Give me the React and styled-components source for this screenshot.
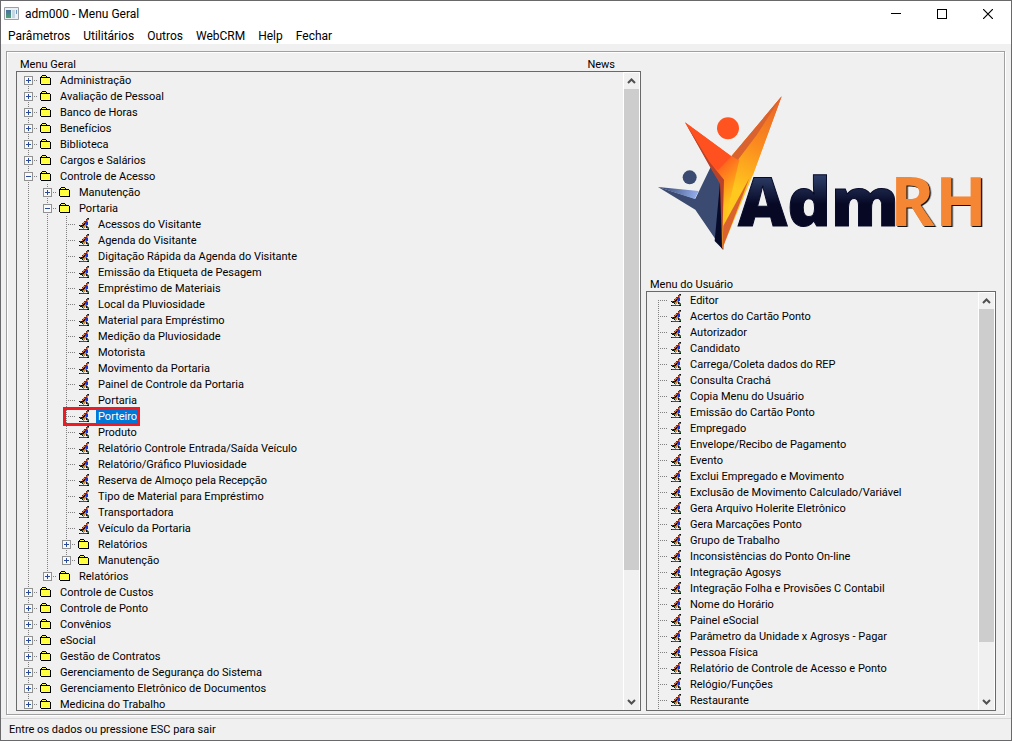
import { useState } from "react";
import styled, { createGlobalStyle } from "styled-components";

const GlobalStyle = createGlobalStyle`
  * {
    box-sizing: border-box;
  }
  body {
    margin: 0;
    font-family: Roboto, "Liberation Sans", sans-serif;
    font-size: 11px;
    color: #000;
  }
  button {
    padding: 0;
    border: none;
    background: none;
    font: inherit;
    color: inherit;
  }
`;

const Window = styled.div`
  display: flex;
  flex-direction: column;
  height: 100vh;
  border: 1px solid #69696b;
  background: #f0f0f0;
`;

const TitleBar = styled.header`
  display: flex;
  align-items: center;
  height: 25px;
  padding-left: 3px;
  background: #fff;
`;

const Title = styled.h1`
  flex: 1;
  margin: 0 0 0 6px;
  font-size: 12px;
  font-weight: 400;
`;

const WindowButton = styled.button`
  display: flex;
  align-items: center;
  justify-content: center;
  width: 46px;
  height: 25px;
`;

const MenuBar = styled.nav`
  display: flex;
  gap: 13px;
  height: 18px;
  padding-left: 7px;
  background: #fff;
`;

const MenuButton = styled.button`
  height: 18px;
  font-size: 12px;
  line-height: 20px;
`;

const Frame = styled.main`
  flex: 1;
  min-height: 0;
  display: grid;
  grid-template-columns: minmax(0, 1fr) 350px;
  gap: 5px;
  margin: 7px 6px 3px 5px;
  padding: 4px 8px 3px 9px;
  border: 1px solid #a0a0a0;
  box-shadow: 1px 1px 0 #fff, inset 1px 1px 0 #fff;
`;

const Column = styled.section`
  display: flex;
  flex-direction: column;
  min-width: 0;
  min-height: 0;
`;

const Captions = styled.div`
  display: flex;
  justify-content: space-between;
  height: 15px;
  padding: 0 26px 0 4px;
  line-height: 17px;
`;

const Caption = styled.h2`
  margin: 0;
  font-size: 11px;
  font-weight: 400;
`;

const LogoArea = styled.div`
  display: flex;
  align-items: center;
  justify-content: center;
  height: 220px;
  padding: 14px 0 0 2px;
`;

const ListBox = styled.div`
  flex: 1;
  min-height: 0;
  display: flex;
  border: 1px solid #696969;
`;

const Tree = styled.ul`
  flex: 1;
  min-width: 0;
  margin: 0;
  padding: 0 0 0 2px;
  overflow: hidden;
  list-style: none;
`;

const Branch = styled.ul`
  margin: 0;
  padding: 0;
  list-style: none;
`;

const Row = styled.div`
  display: flex;
  align-items: center;
  width: max-content;
  height: 16px;
`;

const RowItem = styled.div`
  display: flex;
  height: 16px;
`;

// thick red frame over the row, does not push the neighbours
const MarkedItem = styled(RowItem)`
  position: relative;
  &::after {
    content: "";
    position: absolute;
    inset: -1px -3px -2px 6px;
    border: 3px solid #ed1c24;
    pointer-events: none;
  }
`;

const Cell = styled.span`
  display: block;
  width: 19px;
  height: 16px;
`;

const Toggle = styled.button`
  display: block;
  width: 19px;
  height: 16px;
`;

const IconSlot = styled.span`
  display: flex;
  align-items: center;
  width: 20px;
  height: 16px;
  padding-left: ${(props) => (props.$folder ? 2 : 3)}px;
`;

const Label = styled.button`
  height: 16px;
  padding: 1px 0 0 2px;
  line-height: 15px;
  white-space: nowrap;
  background: ${(props) => (props.$active ? "#0078d7" : "transparent")};
  color: ${(props) => (props.$active ? "#fff" : "#000")};
`;

const ScrollBar = styled.div`
  display: flex;
  flex-direction: column;
  width: 17px;
  border: 1px solid #fff;
  border-width: 1px 1px 0 1px;
`;

const ScrollButton = styled.button`
  display: flex;
  align-items: center;
  justify-content: center;
  height: 16px;
`;

const Track = styled.div`
  flex: 1;
`;

const Thumb = styled.div`
  height: ${(props) => props.$size}%;
  background: #cdcdcd;
`;

const StatusBar = styled.footer`
  height: 22px;
  padding-left: 8px;
  border-top: 1px solid #d7d7d7;
  line-height: 22px;
`;

const menus = ["Parâmetros", "Utilitários", "Outros", "WebCRM", "Help", "Fechar"];

const portaria = [
  "Acessos do Visitante",
  "Agenda do Visitante",
  "Digitação Rápida da Agenda do Visitante",
  "Emissão da Etiqueta de Pesagem",
  "Empréstimo de Materiais",
  "Local da Pluviosidade",
  "Material para Empréstimo",
  "Medição da Pluviosidade",
  "Motorista",
  "Movimento da Portaria",
  "Painel de Controle da Portaria",
  "Portaria",
  "Porteiro",
  "Produto",
  "Relatório Controle Entrada/Saída Veículo",
  "Relatório/Gráfico Pluviosidade",
  "Reserva de Almoço pela Recepção",
  "Tipo de Material para Empréstimo",
  "Transportadora",
  "Veículo da Portaria",
];

const folder = (label, children = [], open = false) => ({ label, children, open });
const program = (label) => ({ label });

const mainMenu = [
  folder("Administração"),
  folder("Avaliação de Pessoal"),
  folder("Banco de Horas"),
  folder("Benefícios"),
  folder("Biblioteca"),
  folder("Cargos e Salários"),
  folder(
    "Controle de Acesso",
    [
      folder("Manutenção"),
      folder(
        "Portaria",
        [...portaria.map(program), folder("Relatórios"), folder("Manutenção")],
        true
      ),
      folder("Relatórios"),
    ],
    true
  ),
  folder("Controle de Custos"),
  folder("Controle de Ponto"),
  folder("Convênios"),
  folder("eSocial"),
  folder("Gestão de Contratos"),
  folder("Gerenciamento de Segurança do Sistema"),
  folder("Gerenciamento Eletrônico de Documentos"),
  folder("Medicina do Trabalho"),
];

const userMenu = [
  "Editor",
  "Acertos do Cartão Ponto",
  "Autorizador",
  "Candidato",
  "Carrega/Coleta dados do REP",
  "Consulta Crachá",
  "Copia Menu do Usuário",
  "Emissão do Cartão Ponto",
  "Empregado",
  "Envelope/Recibo de Pagamento",
  "Evento",
  "Exclui Empregado e Movimento",
  "Exclusão de Movimento Calculado/Variável",
  "Gera Arquivo Holerite Eletrônico",
  "Gera Marcações Ponto",
  "Grupo de Trabalho",
  "Inconsistências do Ponto On-line",
  "Integração Agosys",
  "Integração Folha e Provisões C Contabil",
  "Nome do Horário",
  "Painel eSocial",
  "Parâmetro da Unidade x Agrosys - Pagar",
  "Pessoa Física",
  "Relatório de Controle de Acesso e Ponto",
  "Relógio/Funções",
  "Restaurante",
  "",
].map(program);

const runnerPixels = [
  "........nk.",
  ".......nrr.",
  ".......ro..",
  ".....nbbo..",
  "....oobbn..",
  "...nokbbb..",
  "...okkobb..",
  "kgkkkoor...",
  ".kkgooykr..",
  "...kyo.knr.",
  "....o...og.",
  "kgggggggkk.",
];

const runnerColors = {
  k: "#101010",
  n: "#6b2a10",
  r: "#c4471c",
  o: "#e8782a",
  y: "#f5b800",
  b: "#1733e0",
  g: "#2f5a3c",
};

function RunnerIcon() {
  return (
    <svg width="11" height="12" viewBox="0 0 11 12" shapeRendering="crispEdges">
      {runnerPixels.map((line, y) =>
        [...line].map((c, x) =>
          c === "." ? null : (
            <rect key={x + "-" + y} x={x} y={y} width="1" height="1" fill={runnerColors[c]} />
          )
        )
      )}
    </svg>
  );
}

function FolderIcon() {
  return (
    <svg width="11" height="10" viewBox="0 0 11 10" shapeRendering="crispEdges">
      <path d="M2 1h4v2h4v6H1V3h1z" fill="#ffff3c" />
      <path d="M2 0h4v1H2zM1 1h1v1H1zM6 1h1v1H6zM0 2h10v1H0zM0 2h1v7H0zM10 3h1v7h-1zM1 9h10v1H1z" fill="#000" />
      <path d="M2 4h1v1H2zM4 4h1v1H4zM6 4h1v1H6zM8 4h1v1H8zM3 6h1v1H3zM5 6h1v1H5zM7 6h1v1H7zM2 8h1v1H2zM4 8h1v1H4zM6 8h1v1H6zM8 8h1v1H8z" fill="#fffbb0" />
    </svg>
  );
}

function Guide({ kind, up = true, down = true, open }) {
  const top = up ? 0 : 8;
  const bottom = down ? 16 : 9;
  return (
    <svg width="19" height="16" viewBox="0 0 19 16" display="block" shapeRendering="crispEdges">
      {kind !== "blank" && (
        <path d={`M9.5 ${top}V${bottom}`} stroke="#808080" strokeDasharray="1 1" />
      )}
      {(kind === "leaf" || kind === "box") && (
        <path d="M9 8.5H19" stroke="#808080" strokeDasharray="1 1" />
      )}
      {kind === "box" && (
        <>
          <rect x="5.5" y="4.5" width="8" height="8" fill="#f8f8f8" stroke="#919191" />
          <path d={open ? "M7 8.5h5" : "M7 8.5h5M9.5 6v5"} stroke="#2c4a9a" />
        </>
      )}
    </svg>
  );
}

function TreeNode({ node, lines, first, last, active, onSelect }) {
  const [open, setOpen] = useState(Boolean(node.open));
  const isFolder = Boolean(node.children);
  const Item = node.label === "Porteiro" ? MarkedItem : RowItem;

  return (
    <li>
      <Row>
        {lines.map((on, i) => (
          <Cell key={i}>
            <Guide kind={on ? "line" : "blank"} />
          </Cell>
        ))}
        <Item>
          {isFolder ? (
            <Toggle aria-label={"Abrir " + node.label} aria-expanded={open} onClick={() => setOpen(!open)}>
              <Guide kind="box" up={!first} down={!last} open={open} />
            </Toggle>
          ) : (
            <Cell>
              <Guide kind="leaf" up={!first} down={!last} />
            </Cell>
          )}
          <IconSlot $folder={isFolder}>{isFolder ? <FolderIcon /> : <RunnerIcon />}</IconSlot>
          <Label $active={active === node.label && !isFolder} onClick={() => onSelect(node.label)}>
            {node.label}
          </Label>
        </Item>
      </Row>
      {open && node.children.length > 0 && (
        <Branch>
          {node.children.map((child, i) => (
            <TreeNode
              key={child.label + i}
              node={child}
              lines={[...lines, !last]}
              last={i === node.children.length - 1}
              active={active}
              onSelect={onSelect}
            />
          ))}
        </Branch>
      )}
    </li>
  );
}

function TreeList({ items, selected, thumb }) {
  const [active, setActive] = useState(selected);

  return (
    <ListBox>
      <Tree>
        {items.map((item, i) => (
          <TreeNode
            key={item.label}
            node={item}
            lines={[]}
            first={i === 0}
            last={i === items.length - 1}
            active={active}
            onSelect={setActive}
          />
        ))}
      </Tree>
      <ScrollBar>
        <ScrollButton aria-label="Rolar para cima">
          <svg width="9" height="6" viewBox="0 0 9 6">
            <path d="M1 5l3.500-3.500L8 5" fill="none" stroke="#505050" strokeWidth="2" />
          </svg>
        </ScrollButton>
        <Track>
          <Thumb $size={thumb} />
        </Track>
        <ScrollButton aria-label="Rolar para baixo">
          <svg width="9" height="6" viewBox="0 0 9 6">
            <path d="M1 1l3.500 3.500L8 1" fill="none" stroke="#505050" strokeWidth="2" />
          </svg>
        </ScrollButton>
      </ScrollBar>
    </ListBox>
  );
}

const Surname = styled.text`
  fill: #f58634;
  font-weight: 700;
  filter: drop-shadow(4px 3px 0 #111);
`;

function Logo() {
  return (
    <svg width="332" height="160" viewBox="48 40 996 480" overflow="visible" role="img" aria-label="AdmRH">
      <defs>
        <linearGradient id="navy" x1="0" y1="0" x2="0" y2="1">
          <stop offset="0.25" stopColor="#2c3c66" />
          <stop offset="0.55" stopColor="#060824" />
        </linearGradient>
        <linearGradient id="flame" gradientUnits="userSpaceOnUse" x1="235" y1="250" x2="310" y2="330">
          <stop offset="0" stopColor="#ff5a1f" />
          <stop offset="0.6" stopColor="#ff9a1a" />
          <stop offset="1" stopColor="#ffc21c" />
        </linearGradient>
        <linearGradient id="arm" gradientUnits="userSpaceOnUse" x1="420" y1="60" x2="290" y2="330">
          <stop offset="0" stopColor="#e8642a" />
          <stop offset="0.5" stopColor="#fb8a1e" />
          <stop offset="1" stopColor="#ffc81e" />
        </linearGradient>
        <linearGradient id="wing" gradientUnits="userSpaceOnUse" x1="60" y1="320" x2="165" y2="350">
          <stop offset="0" stopColor="#34436b" />
          <stop offset="1" stopColor="#8fa9e6" />
        </linearGradient>
      </defs>
      <circle cx="149" cy="293" r="21" fill="#3b4a70" />
      <path d="M54 322L166 357L212 262L244 312L248 510L166 390Z" fill="#3b4a70" />
      <path d="M54 322L176 334L164 358Z" fill="url(#wing)" />
      <path d="M240 310L250 330V510L224 484Z" fill="#070b2a" />
      <circle cx="264" cy="146" r="33" fill="#ff5420" />
      <path d="M135 128L212 262L246 318V508L340 282L425 50L274 230Z" fill="url(#flame)" />
      <path d="M425 50L274 230L298 240L252 440L340 282Z" fill="url(#arm)" />
      <path d="M425 50L274 230L294 240L350 166Z" fill="#d9622f" />
      <path d="M135 128L274 230L234 272L208 252Z" fill="#ff5120" />
      <path d="M135 128L208 246L252 300L246 508L240 312L210 262Z" fill="#b8432a" />
      <path d="M328 296L250 438L246 510Z" fill="#d9622f" />
      <g fontFamily="'Open Sans', 'Noto Sans', sans-serif" fontSize="204">
        <text x="294" y="440" fontWeight="800" fill="url(#navy)" stroke="#080b28" strokeWidth="3">
          Adm
        </text>
        <Surname x="750" y="438">
          RH
        </Surname>
      </g>
    </svg>
  );
}

function App() {
  return (
    <>
      <GlobalStyle />
      <Window>
        <TitleBar>
          <svg width="15" height="13" viewBox="0 0 15 13">
            <defs>
              <linearGradient id="app" x1="0" y1="0" x2="0" y2="1">
                <stop offset="0" stopColor="#4a6fa0" />
                <stop offset="1" stopColor="#4fa070" />
              </linearGradient>
            </defs>
            <path d="M0.500 0.500h14v12h-14z" fill="#eef1f4" stroke="#9aa0a6" />
            <path d="M2 3h5v8H2z" fill="url(#app)" />
            <path d="M8 3h3v8H8z" fill="#c4d6e2" />
            <path d="M12 3h1v4h-1z" fill="#6a9ac0" />
          </svg>
          <Title>adm000 - Menu Geral</Title>
          <WindowButton aria-label="Minimizar">
            <svg width="10" height="10" viewBox="0 0 10 10" shapeRendering="crispEdges">
              <path d="M0 4.500h10" stroke="#000" />
            </svg>
          </WindowButton>
          <WindowButton aria-label="Maximizar">
            <svg width="10" height="10" viewBox="0 0 10 10" shapeRendering="crispEdges">
              <path d="M0.500 0.500h9v9h-9z" fill="none" stroke="#000" />
            </svg>
          </WindowButton>
          <WindowButton aria-label="Fechar janela">
            <svg width="10" height="10" viewBox="0 0 10 10">
              <path d="M0 0l10 10M10 0L0 10" stroke="#000" strokeWidth="1.200" />
            </svg>
          </WindowButton>
        </TitleBar>
        <MenuBar>
          {menus.map((menu) => (
            <MenuButton key={menu}>{menu}</MenuButton>
          ))}
        </MenuBar>
        <Frame>
          <Column>
            <Captions>
              <Caption>Menu Geral</Caption>
              <Caption>News</Caption>
            </Captions>
            <TreeList items={mainMenu} selected="Porteiro" thumb={79.5} />
          </Column>
          <Column>
            <LogoArea>
              <Logo />
            </LogoArea>
            <Captions>
              <Caption>Menu do Usuário</Caption>
            </Captions>
            <TreeList items={userMenu} thumb={86.5} />
          </Column>
        </Frame>
        <StatusBar>Entre os dados ou pressione ESC para sair</StatusBar>
      </Window>
    </>
  );
}

export default App;
